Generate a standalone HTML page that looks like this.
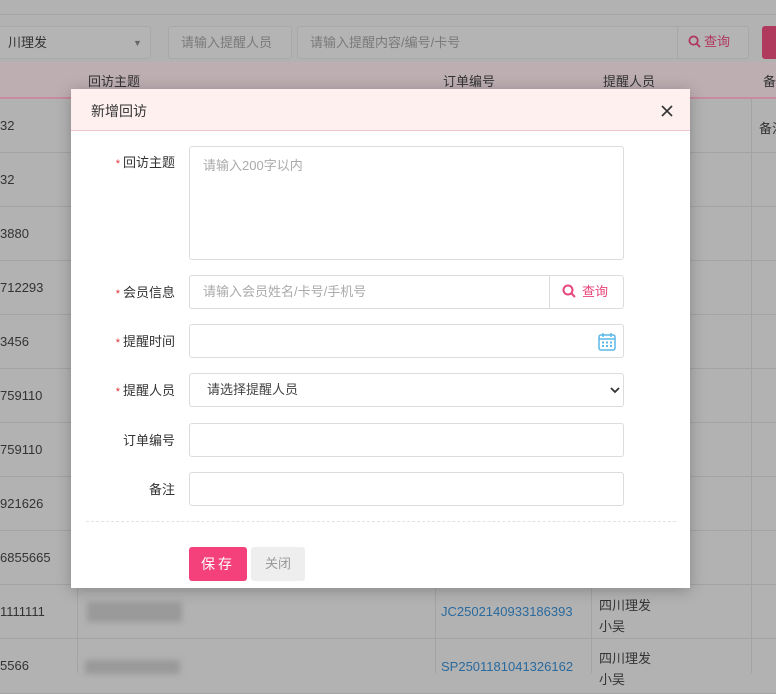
<!DOCTYPE html>
<html><head><meta charset="utf-8"><style>
*{box-sizing:border-box;margin:0;padding:0}
html,body{background:#b2b2b2}
body{width:776px;height:673px;overflow:hidden;position:relative;font-family:"Liberation Sans","Noto Sans CJK SC",sans-serif;font-size:13px;color:#333}
.abs{position:absolute;white-space:nowrap}
.top{left:0;top:0;width:776px;height:15px;background:#b2b2b2;border-bottom:1px solid #a5a5a5}
.in{border:1px solid #a8a8a8;border-radius:3px;background:#b4b4b4;color:#7a7a7a;font-size:13px;line-height:32px;padding-left:12px}
.hdr{left:0;top:62px;width:776px;height:37px;background:#bdaeb2;border-bottom:2px solid #c88a9e}
.hdr span{position:absolute;top:9px;color:#333}
.row{left:0;width:776px;height:54px;border-bottom:1px solid #a3a3a3}
.vl{top:99px;width:1px;height:574px;background:#a3a3a3}
.num{left:0;color:#333;font-size:13px}
.modal{left:71px;top:89px;width:619px;height:499px;background:#fff;box-shadow:0 2px 14px rgba(0,0,0,.25)}
.mh{left:0;top:0;width:619px;height:42px;background:#fff0f0;border-bottom:1px solid #efc6d0;font-size:14px;color:#333;padding:12px 0 0 20px}
.lab{width:104px;text-align:right;left:0;font-size:13px;color:#333}
.lab b{color:#e0303a;font-weight:normal;font-size:11px;margin-right:3px}
.fi{left:118px;width:435px;border:1px solid #dcdcdc;border-radius:3px;color:#aaa;font-size:13px;padding-left:13px}
.blur{background:#999;filter:blur(3px)}
</style></head><body>
<div class="abs top"></div>
<div class="abs in" style="left:-5px;top:26px;width:156px;height:33px;color:#333">川理发<span style="position:absolute;left:137px;top:0;font-size:9px;color:#666">▼</span></div>
<div class="abs in" style="left:168px;top:26px;width:124px;height:33px">请输入提醒人员</div>
<div class="abs in" style="left:297px;top:26px;width:452px;height:33px">请输入提醒内容/编号/卡号<span style="position:absolute;left:379px;top:-1px;height:33px;border-left:1px solid #a8a8a8;padding-left:10px;color:#b0395e"><svg width="13" height="13" viewBox="0 0 14 14" style="vertical-align:-2px;margin-right:3px"><circle cx="6" cy="6" r="4.5" fill="none" stroke="#b0395e" stroke-width="2"/><path d="M9.5 9.5L13 13" stroke="#b0395e" stroke-width="2"/></svg>查询</span></div>
<div class="abs" style="left:762px;top:26px;width:20px;height:33px;background:#b0395e;border-radius:3px"></div>
<div class="abs hdr"><span style="left:88px">回访主题</span><span style="left:443px">订单编号</span><span style="left:603px">提醒人员</span><span style="left:763px">备</span></div>
<div class="abs row" style="top:99px"></div><div class="abs row" style="top:153px"></div><div class="abs row" style="top:207px"></div><div class="abs row" style="top:261px"></div><div class="abs row" style="top:315px"></div><div class="abs row" style="top:369px"></div><div class="abs row" style="top:423px"></div><div class="abs row" style="top:477px"></div><div class="abs row" style="top:531px"></div><div class="abs row" style="top:585px"></div><div class="abs row" style="top:640px"></div>
<div class="abs vl" style="left:77px"></div><div class="abs vl" style="left:435px"></div><div class="abs vl" style="left:591px"></div><div class="abs vl" style="left:751px"></div>
<div class="abs num" style="top:118px">32</div><div class="abs num" style="top:172px">32</div><div class="abs num" style="top:226px">3880</div><div class="abs num" style="top:280px">712293</div><div class="abs num" style="top:334px">3456</div><div class="abs num" style="top:388px">759110</div><div class="abs num" style="top:442px">759110</div><div class="abs num" style="top:496px">921626</div><div class="abs num" style="top:550px">6855665</div><div class="abs num" style="top:604px">1111111</div><div class="abs num" style="top:658px">5566</div>
<div class="abs" style="left:759px;top:118px">备注</div>
<div class="abs blur" style="left:87px;top:602px;width:95px;height:20px"></div>
<div class="abs blur" style="left:85px;top:660px;width:95px;height:14px"></div>
<div class="abs" style="left:441px;top:604px;color:#2a6a9e">JC2502140933186393</div>
<div class="abs" style="left:441px;top:659px;color:#2a6a9e">SP2501181041326162</div>
<div class="abs" style="left:599px;top:595px;line-height:21px">四川理发<br>小吴</div>
<div class="abs" style="left:599px;top:648px;line-height:21px">四川理发<br>小吴</div>

<div class="abs modal">
<div class="abs mh">新增回访<svg width="12" height="12" viewBox="0 0 12 12" style="position:absolute;left:590px;top:16px"><path d="M1 1L11 11M11 1L1 11" stroke="#333" stroke-width="1.6"/></svg></div>
<div class="abs lab" style="top:63px"><b>*</b>回访主题</div>
<div class="abs fi" style="top:57px;height:114px;padding-top:8px">请输入200字以内</div>
<div class="abs lab" style="top:193px"><b>*</b>会员信息</div>
<div class="abs fi" style="top:186px;height:34px;line-height:32px">请输入会员姓名/卡号/手机号<span style="position:absolute;left:359px;top:0;width:74px;height:32px;border-left:1px solid #dcdcdc;color:#e8457a;padding-left:12px"><svg width="14" height="14" viewBox="0 0 14 14" style="vertical-align:-2px;margin-right:6px"><circle cx="6" cy="6" r="4.5" fill="none" stroke="#e8457a" stroke-width="2"/><path d="M9.5 9.5L13 13" stroke="#e8457a" stroke-width="2"/></svg>查询</span></div>
<div class="abs lab" style="top:242px"><b>*</b>提醒时间</div>
<div class="abs fi" style="top:235px;height:34px"><svg width="18" height="19" viewBox="0 0 18 19" style="position:absolute;left:408px;top:7px"><rect x="1" y="3" width="16" height="15" rx="2" fill="none" stroke="#5cb8e8" stroke-width="1.5"/><path d="M1 7h16M5 1v4M13 1v4" stroke="#5cb8e8" stroke-width="1.5"/><g fill="#5cb8e8"><rect x="4" y="9.5" width="2" height="2"/><rect x="8" y="9.5" width="2" height="2"/><rect x="12" y="9.5" width="2" height="2"/><rect x="4" y="13" width="2" height="2"/><rect x="8" y="13" width="2" height="2"/><rect x="12" y="13" width="2" height="2"/></g></svg></div>
<div class="abs lab" style="top:291px"><b>*</b>提醒人员</div>
<div class="abs fi" style="top:284px;height:34px;line-height:32px;color:#444;padding-left:17px">请选择提醒人员<svg width="10" height="7" viewBox="0 0 10 7" style="position:absolute;left:420px;top:13px"><path d="M1 1l4 4 4-4" fill="none" stroke="#333" stroke-width="1.8"/></svg></div>
<div class="abs lab" style="top:341px">订单编号</div>
<div class="abs fi" style="top:334px;height:34px"></div>
<div class="abs lab" style="top:390px">备注</div>
<div class="abs fi" style="top:383px;height:34px"></div>
<div class="abs" style="left:15px;top:432px;width:590px;border-top:1px dashed #e2e2e2"></div>
<div class="abs" style="left:118px;top:458px;width:58px;height:34px;background:#f4417c;border-radius:3px;color:#fff;font-size:14px;line-height:34px;text-align:center;letter-spacing:3px">保存</div>
<div class="abs" style="left:180px;top:458px;width:54px;height:34px;background:#eeeeee;border-radius:3px;color:#999;line-height:34px;text-align:center">关闭</div>
</div>
</body></html>
